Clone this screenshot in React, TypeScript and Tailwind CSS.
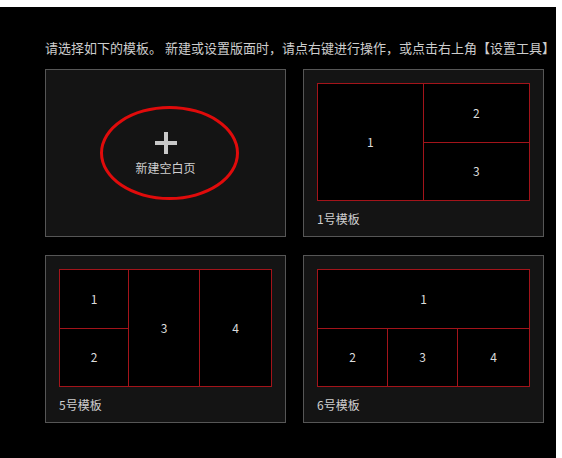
const font = { fontFamily: '"Noto Sans CJK SC", "Noto Sans", sans-serif' };

/** Outer frame of a template card. */
function Card({ label, children }: { label?: string; children: React.ReactNode }) {
  return (
    <div className="relative flex h-[168px] w-[241px] flex-col border border-[#565656] bg-[#141414] px-[13px] pt-[13px]">
      {children}
      {label && <div className="flex h-[35px] items-center text-[12px] text-[#cfcfcf]">{label}</div>}
    </div>
  );
}

/** A numbered slot inside the layout preview. */
function Cell({ n, className = '' }: { n: number; className?: string }) {
  return (
    <div className={`flex items-center justify-center bg-black text-[12px] text-[#dcdcdc] ${className}`}>{n}</div>
  );
}

export default function App() {
  return (
    <div className="h-[458px] w-[562px] bg-white pt-[7px]" style={font}>
      <div className="h-[451px] w-[556px] bg-black pl-[45px] pt-[31px]">
        <p className="mb-[11px] h-[20px] whitespace-nowrap text-[13px] leading-[20px] text-[#cdcdcd]">
          请选择如下的模板。 新建或设置版面时，请点右键进行操作，或点击右上角【设置工具】
        </p>
        <div className="grid grid-cols-[241px_241px] gap-x-[17px] gap-y-[18px]">
          {/* blank page */}
          <Card>
            <div className="flex flex-1 flex-col items-center justify-center pb-[13px] text-[#cfcfcf]">
              <svg width="22" height="22" viewBox="0 0 22 22" className="mt-[2px]">
                <rect x="9" y="0" width="4" height="22" fill="#c8c8c8" />
                <rect x="0" y="9" width="22" height="4" fill="#c8c8c8" />
              </svg>
              <span className="mt-[5px] text-[12px]">新建空白页</span>
            </div>
            {/* red annotation ring */}
            <div className="pointer-events-none absolute left-[54px] top-[36px] h-[94px] w-[139px] rounded-[50%] border-[3px] border-[#e00b0b]" />
          </Card>

          {/* template 1 */}
          <Card label="1号模板">
            <div className="grid h-[118px] grid-cols-2 border border-[#a3141a]">
              <Cell n={1} className="border-r border-[#a3141a]" />
              <div className="flex flex-col">
                <Cell n={2} className="flex-1 border-b border-[#a3141a]" />
                <Cell n={3} className="flex-1" />
              </div>
            </div>
          </Card>

          {/* template 5 */}
          <Card label="5号模板">
            <div className="grid h-[118px] grid-cols-[69px_71px_1fr] border border-[#a3141a]">
              <div className="flex flex-col border-r border-[#a3141a]">
                <Cell n={1} className="flex-1 border-b border-[#a3141a]" />
                <Cell n={2} className="flex-1" />
              </div>
              <Cell n={3} className="border-r border-[#a3141a]" />
              <Cell n={4} />
            </div>
          </Card>

          {/* template 6 */}
          <Card label="6号模板">
            <div className="flex h-[118px] flex-col border border-[#a3141a]">
              <Cell n={1} className="flex-1 border-b border-[#a3141a]" />
              <div className="grid flex-1 grid-cols-[70px_70px_1fr]">
                <Cell n={2} className="border-r border-[#a3141a]" />
                <Cell n={3} className="border-r border-[#a3141a]" />
                <Cell n={4} />
              </div>
            </div>
          </Card>
        </div>
      </div>
    </div>
  );
}
